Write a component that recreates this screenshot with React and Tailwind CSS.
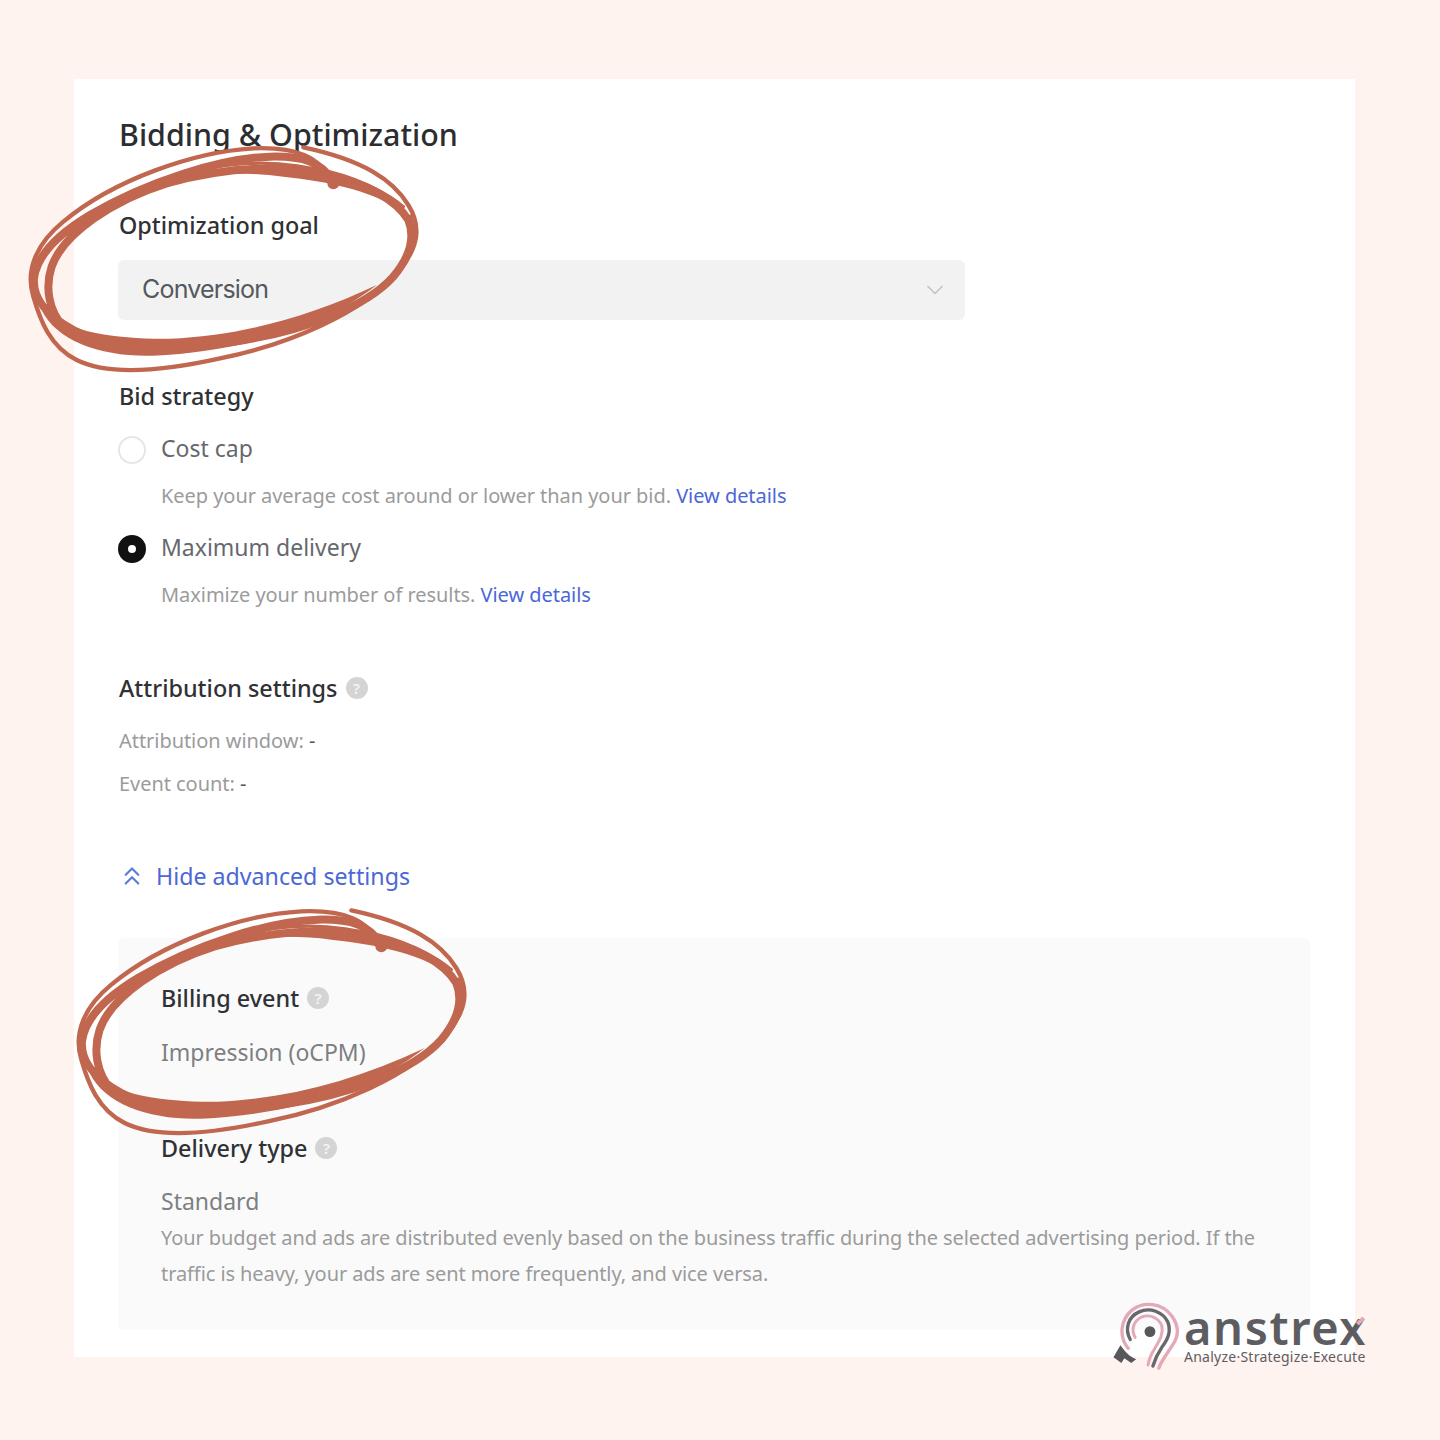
import { ChevronDown, ChevronsUp } from "lucide-react";

const Help = () => (
  <span className="ml-2 inline-flex h-[22px] w-[22px] items-center justify-center rounded-full bg-[#d4d4d4] text-[15px] font-semibold leading-none text-[#f4f4f4]">
    ?
  </span>
);

const Label = ({ children, className = "" }) => (
  <div className={`flex h-8 items-center text-[23.4px] font-medium leading-8 text-[#2f3134] ${className}`}>{children}</div>
);

const Hint = ({ children, className = "" }) => (
  <p className={`text-[20px] leading-[30px] tracking-[-0.05px] text-[#9b9b9b] ${className}`}>{children}</p>
);

const Link = ({ children }) => <span className="text-[#4b67d6]">{children}</span>;

// traced from the reference at 3x, hence the 1260x870 viewBox
const Scribble = ({ className }) => (
  <svg viewBox="0 0 1260 870" fill="none" stroke="#c1674f" strokeLinecap="round" strokeLinejoin="round" className={className}>
    <path strokeWidth="13" d="M940 250C900 170 830 140 700 145C520 155 280 240 130 365C50 430 15 510 40 590C60 660 90 740 170 780C260 825 420 815 600 775C800 735 1030 640 1140 510C1195 440 1205 380 1165 315C1120 240 1030 180 850 142" />
    <path strokeWidth="24" d="M940 245C905 185 850 168 750 170C600 175 380 245 210 345C110 405 50 470 42 535C38 590 70 640 160 690C260 745 420 755 640 725C850 695 1040 620 1120 530C1170 470 1185 410 1165 360C1130 300 1040 250 920 220C780 195 620 200 440 250C280 300 130 400 95 500C75 560 85 630 130 680" />
    <path strokeWidth="10" d="M170 375C300 270 520 195 700 190C850 185 1050 235 1150 320" />
    <path strokeWidth="12" d="M1155 490C1180 440 1185 400 1170 350" />
    <path fill="#c1674f" stroke="none" d="M65 630C150 700 300 718 450 716C650 708 860 655 1070 555C900 690 650 755 400 767C250 772 110 725 65 630Z" />
    <path fill="#c1674f" stroke="none" d="M450 240C620 195 780 185 925 220C1000 240 1070 265 1125 320C1040 270 930 245 790 230C680 215 560 220 450 240Z" />
    <circle cx="940" cy="250" r="18" fill="#c1674f" stroke="none" />
  </svg>
);

const Logo = () => (
  <div className="absolute left-[1112px] top-[1302px] flex w-[256px] items-start">
    <svg viewBox="0 0 70 70" fill="none" strokeLinecap="round" className="h-[69px] w-[70px] shrink-0">
      <path stroke="#e3a9b6" strokeWidth="3.4" d="M16 47C6 35 8 18 20 8C32 -1 50 1 60 14C68 25 67 36 60 45C55 53 50 59 47 67" />
      <path stroke="#68686c" strokeWidth="3.4" d="M18 38C12 27 16 15 27 10C38 5 51 10 56 20C60 30 56 38 50 46C46 52 43 58 41 65" />
      <path stroke="#e3a9b6" strokeWidth="3" d="M23 36C18 27 22 19 30 15C39 12 47 17 50 24C52 33 47 40 43 47C39 53 37 58 36 64" />
      <circle cx="38" cy="30" r="5.5" fill="#58585c" />
      <path fill="#58585c" d="M1 56L8 44L12 49C15 53 19 56 24 58L19 62L12 57L9 62Z" />
    </svg>
    <div className="ml-[2px] mt-[3px] flex flex-col text-[#5d5d61]">
      <div className="relative h-[44px] whitespace-nowrap text-[47px] font-semibold leading-[44px] tracking-[1.6px]">
        anstrex
        <span className="absolute right-[2px] top-[14px] h-[4px] w-[9px] -rotate-45 bg-[#e3a9b6]" />
      </div>
      <div className="mt-[1px] whitespace-nowrap text-[14px] leading-[14px] tracking-[0.25px]">Analyze·Strategize·Execute</div>
    </div>
  </div>
);

export default function App() {
  return (
    <div className="relative min-h-[1440px] overflow-hidden bg-[#fff3ef] pl-[74px] pt-[79px] font-['Noto_Sans',sans-serif]">
      <div className="h-[1278px] w-[1281px] bg-white px-[45px] pt-[36px]">
        <h2 className="text-[30.4px] font-medium leading-[40px] text-[#2b2d30]">Bidding &amp; Optimization</h2>

        <Label className="mt-[54px]">Optimization goal</Label>
        <div className="mt-[19px] flex h-[60px] w-[847px] -translate-x-px items-center justify-between rounded-md bg-[#f2f2f2] pl-6 pr-4 font-['Inter',sans-serif] text-[25px] tracking-[-0.8px] text-[#55585c]">
          Conversion
          <ChevronDown className="h-7 w-7 text-[#c4c4c4]" strokeWidth={1.5} />
        </div>

        <Label className="mt-[60px]">Bid strategy</Label>
        <div className="mt-5 flex h-8 items-center gap-[14px] text-[23px] text-[#66686c]">
          <span className="h-7 w-7 -translate-x-px translate-y-0.5 rounded-full border-2 border-[#e6e6e6] bg-white" />
          Cost cap
        </div>
        <Hint className="ml-[42px] mt-[17px]">
          Keep your average cost around or lower than your bid. <Link>View details</Link>
        </Hint>
        <div className="mt-5 flex h-8 items-center gap-[14px] text-[23px] text-[#66686c]">
          <span className="h-7 w-7 -translate-x-px translate-y-0.5 rounded-full border-[10px] border-[#111111] bg-white" />
          Maximum delivery
        </div>
        <Hint className="ml-[42px] mt-[17px]">
          Maximize your number of results. <Link>View details</Link>
        </Hint>

        <Label className="mt-[62px]">
          Attribution settings
          <Help />
        </Label>
        <Hint className="mt-[22px]">
          Attribution window: <span className="text-[#55585c]">-</span>
        </Hint>
        <Hint className="mt-[13px]">
          Event count: <span className="text-[#55585c]">-</span>
        </Hint>

        <div className="mt-[61px] flex h-8 items-center gap-[9px] text-[23.2px] text-[#4b67d6]">
          <ChevronsUp className="-ml-0.5 h-[30px] w-[30px] text-[#5f7bdc]" strokeWidth={1.75} />
          Hide advanced settings
        </div>

        <div className="mt-[46px] -ml-px h-[392px] w-[1192px] rounded-md bg-[#fafafa] pl-[43px] pr-[44px] pt-[44px]">
          <Label>
            Billing event
            <Help />
          </Label>
          <div className="mt-[22px] h-8 text-[23px] leading-8 text-[#7d7f82]">Impression (oCPM)</div>
          <Label className="mt-16">
            Delivery type
            <Help />
          </Label>
          <div className="mt-[21px] h-8 text-[23px] leading-8 text-[#7d7f82]">Standard</div>
          <p className="mt-[3px] text-[20px] leading-[36px] tracking-[-0.08px] text-[#9b9b9b]">
            Your budget and ads are distributed evenly based on the business traffic during the selected advertising period. If the traffic is heavy, your ads are sent more frequently, and vice versa.
          </p>
        </div>
      </div>

      <Scribble className="absolute left-[20px] top-[100px] h-[290px] w-[420px]" />
      <Scribble className="absolute left-[68px] top-[863px] h-[290px] w-[420px]" />
      <Logo />
    </div>
  );
}
